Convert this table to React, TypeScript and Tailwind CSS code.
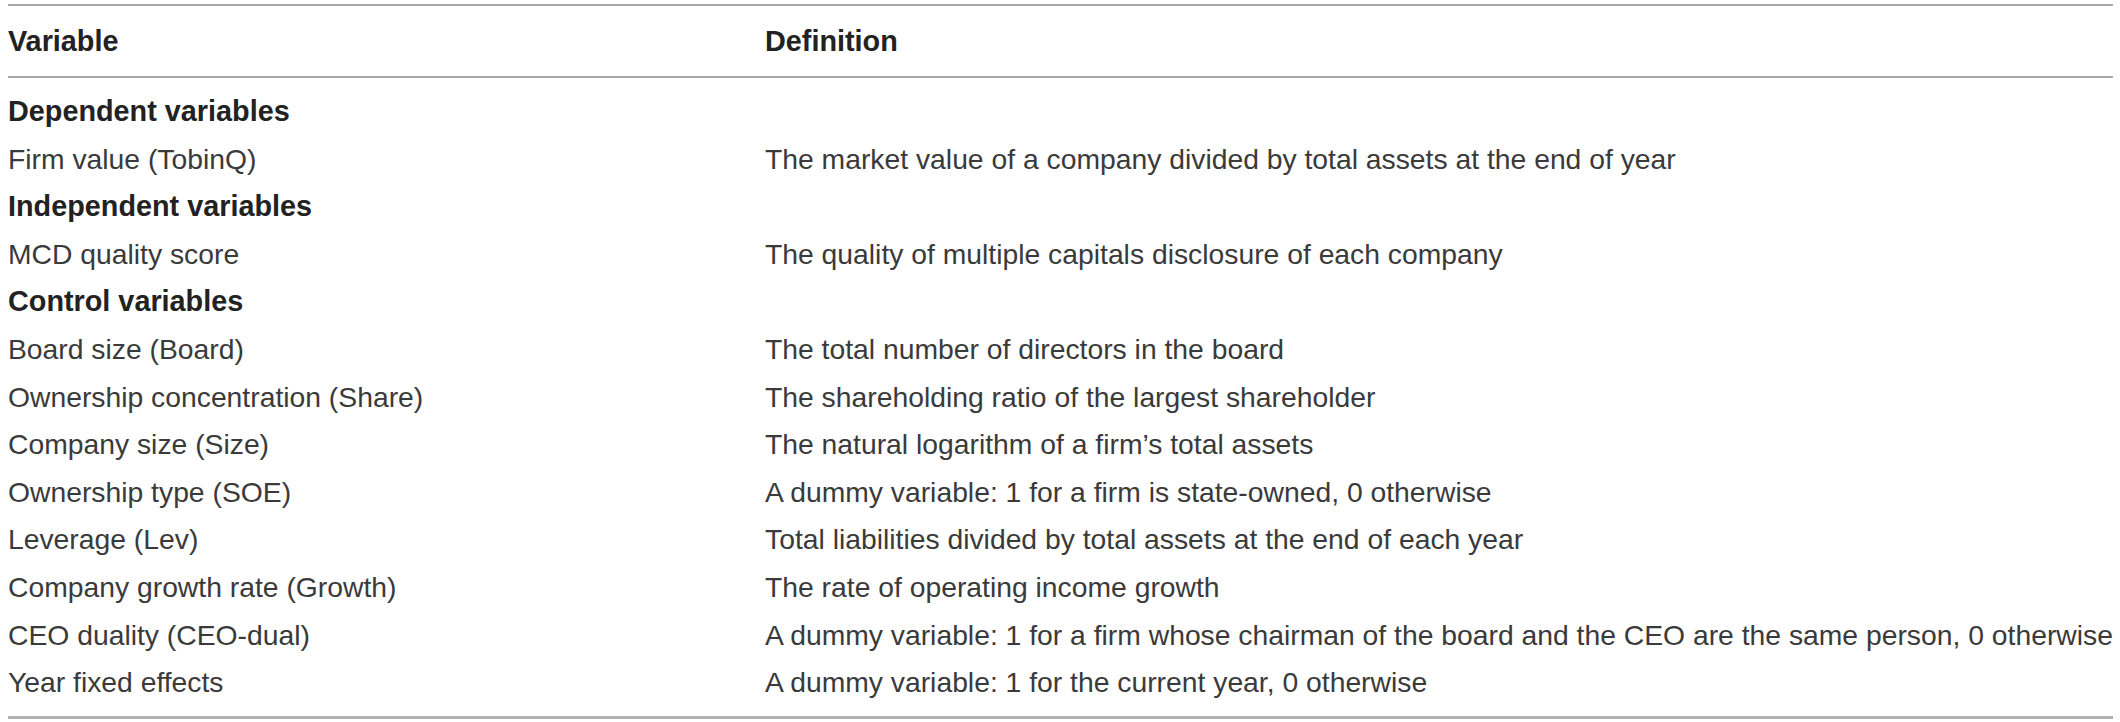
type Row = {
  label: string
  definition?: string
  section?: boolean
}

const rows: Row[] = [
  { label: "Dependent variables", section: true },
  {
    label: "Firm value (TobinQ)",
    definition: "The market value of a company divided by total assets at the end of year",
  },
  { label: "Independent variables", section: true },
  {
    label: "MCD quality score",
    definition: "The quality of multiple capitals disclosure of each company",
  },
  { label: "Control variables", section: true },
  { label: "Board size (Board)", definition: "The total number of directors in the board" },
  {
    label: "Ownership concentration (Share)",
    definition: "The shareholding ratio of the largest shareholder",
  },
  { label: "Company size (Size)", definition: "The natural logarithm of a firm\u2019s total assets" },
  {
    label: "Ownership type (SOE)",
    definition: "A dummy variable: 1 for a firm is state-owned, 0 otherwise",
  },
  {
    label: "Leverage (Lev)",
    definition: "Total liabilities divided by total assets at the end of each year",
  },
  { label: "Company growth rate (Growth)", definition: "The rate of operating income growth" },
  {
    label: "CEO duality (CEO-dual)",
    definition:
      "A dummy variable: 1 for a firm whose chairman of the board and the CEO are the same person, 0 otherwise",
  },
  { label: "Year fixed effects", definition: "A dummy variable: 1 for the current year, 0 otherwise" },
]

export default function App() {
  return (
    <div
      className="min-h-[722px] w-[2120px] bg-white pt-[4px] pl-[8px]"
      style={{ fontFamily: '"Liberation Sans", Arial, sans-serif' }}
    >
      <div className="w-[2105px]">
        {/* header */}
        <div className="flex h-[74px] items-center border-y-2 border-[#a8a8a8] text-[28.8px] font-bold text-[#222]">
          <div className="w-[757px] shrink-0 pt-[2px]">Variable</div>
          <div className="flex-1 pt-[2px]">Definition</div>
        </div>

        {/* body */}
        <div className="border-b-[3px] border-[#b0b0b0] pt-[10px] pb-[9px]">
          {rows.map((row) => (
            <div key={row.label} className="flex h-[47.6px] items-center leading-[47.6px]">
              <div
                className={
                  row.section
                    ? "w-[757px] shrink-0 whitespace-nowrap text-[28.8px] font-bold text-[#222]"
                    : "w-[757px] shrink-0 whitespace-nowrap text-[28.3px] text-[#3a3a3a]"
                }
              >
                {row.label}
              </div>
              <div className="min-w-0 flex-1 whitespace-nowrap text-[28.3px] text-[#3a3a3a]">{row.definition}</div>
            </div>
          ))}
        </div>
      </div>
    </div>
  )
}
